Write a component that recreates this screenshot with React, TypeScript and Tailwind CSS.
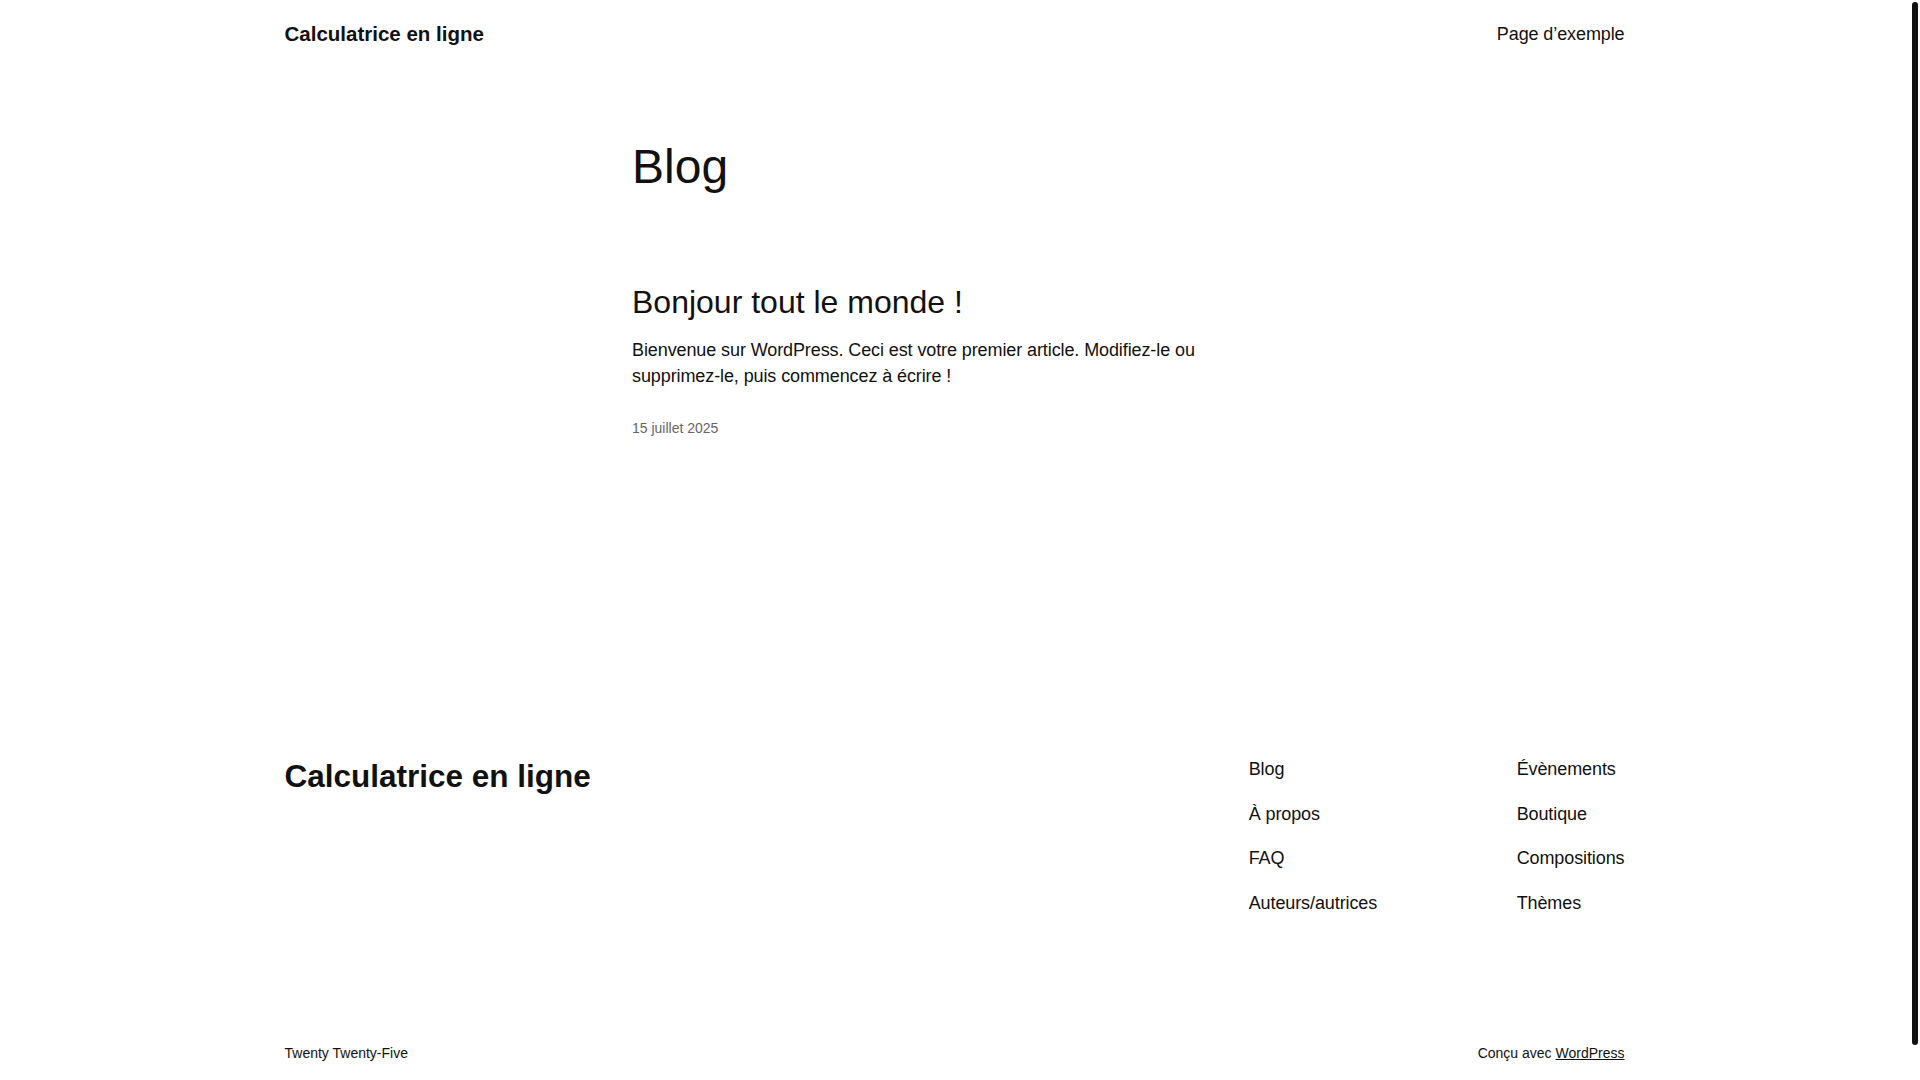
import React from 'react';

const FONT = { fontFamily: '"Liberation Sans", Arial, sans-serif' };

const footerLinks = [
  ['Blog', 'Évènements'],
  ['À propos', 'Boutique'],
  ['FAQ', 'Compositions'],
  ['Auteurs/autrices', 'Thèmes'],
];

export default function App() {
  return (
    <div className="flex h-screen overflow-hidden bg-white text-[#111111]" style={FONT}>
      <div className="flex flex-1 flex-col">
        {/* header */}
        <header className="mx-auto flex h-[68px] w-[1340px] items-center justify-between">
          <a className="text-[20.5px] font-bold leading-none">Calculatrice en ligne</a>
          <nav className="text-[18px] leading-none tracking-[-0.1px]">Page d’exemple</nav>
        </header>

        {/* main */}
        <main className="mx-auto w-[645px]">
          <h1 className="mt-[75px] text-[48px] leading-none">Blog</h1>

          <article className="mt-[92px]">
            <h2 className="text-[32px] leading-[38px]">Bonjour tout le monde !</h2>
            <p className="mt-[17px] text-[18px] leading-[25.5px] tracking-[-0.1px]">
              Bienvenue sur WordPress. Ceci est votre premier article. Modifiez-le ou supprimez-le, puis commencez à écrire !
            </p>
            <div className="mt-[29px] text-[14px] leading-[20px] text-[#666666]">15 juillet 2025</div>
          </article>
        </main>

        {/* footer */}
        <footer className="mx-auto mt-[318px] w-[1340px]">
          <div className="flex items-start justify-between">
            <div className="text-[31.5px] font-bold leading-[40px]">Calculatrice en ligne</div>
            <div className="flex gap-[139.5px] text-[18px] leading-[26px] tracking-[-0.1px]">
              <ul className="flex flex-col gap-[18.5px]">
                {footerLinks.map(([a]) => (
                  <li key={a}>{a}</li>
                ))}
              </ul>
              <ul className="flex flex-col gap-[18.5px]">
                {footerLinks.map(([, b]) => (
                  <li key={b}>{b}</li>
                ))}
              </ul>
            </div>
          </div>
          <div className="mt-[127px] flex items-center justify-between text-[14px] leading-[20px]">
            <span>Twenty Twenty-Five</span>
            <span>
              Conçu avec <a className="underline">WordPress</a>
            </span>
          </div>
        </footer>
      </div>

      {/* scrollbar gutter */}
      <div className="w-[11px] shrink-0">
        <div className="ml-[3px] mt-[2px] h-[1043px] w-[6px] rounded-full bg-[#111111]" />
      </div>
    </div>
  );
}
